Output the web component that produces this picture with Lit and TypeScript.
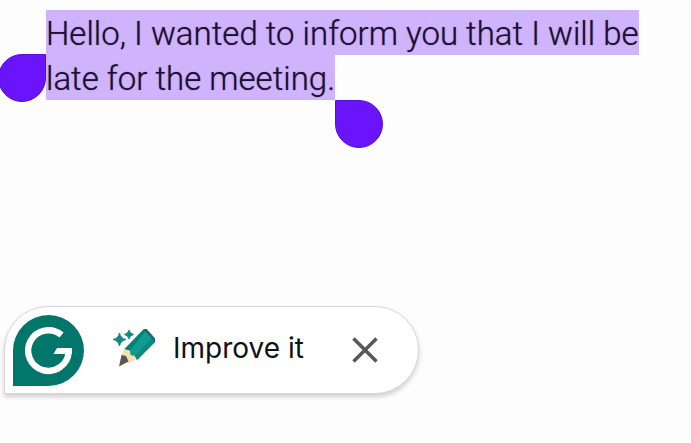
import { LitElement, html, css, svg } from "lit";
import { customElement, state } from "lit/decorators.js";

const logo = svg`
  <path d="M35.500 0A35.500 35.500 0 0 1 35.500 71H0V35.500A35.500 35.500 0 0 1 35.500 0Z" fill="#02766b"/>
  <path d="M48.500 20A20.300 20.300 0 1 0 55.700 37" fill="none" stroke="#fff" stroke-width="6.400"/>
  <path d="M44 33H59V39H40.500Z" fill="#fff"/>`;

const pencil = svg`
  <path d="M6.500 3Q7.500 8.500 13 9.500Q7.500 10.500 6.500 16Q5.500 10.500 0 9.500Q5.500 8.500 6.500 3Z" fill="#12877c" stroke="#12877c"/>
  <path d="M16 0Q16.700 3.800 20.500 4.500Q16.700 5.200 16 9Q15.300 5.200 11.500 4.500Q15.300 3.800 16 0Z" fill="#12877c" stroke="#12877c"/>
  <path d="M11.500 19L8 26L15 33L23 29.500L20 21Z" fill="#f6dfad"/>
  <path d="M8.500 25L6 36.500L15.500 31.500L13 26Z" fill="#5d5456"/>
  <path d="M30 0Q32 -1.500 34 -.5L41.500 8Q43 10.500 41.500 12.500L24 30L22 26L17.500 25L17 20.500L11.500 19Z" fill="#0c9c90"/>
  <path d="M30 0Q32 -1.500 34 -.5L17 20.500L11.500 19Z" fill="#087f76"/>
  <path d="M41.500 8Q43 10.500 41.500 12.500L24 30L22 26L39 8Z" fill="#10877d"/>
  <path d="M30 0Q32 -1.500 34 -.5L41.500 8Q43 10.500 41.500 12.500L40 10L32.500 1.500Z" fill="#176e69"/>`;

@customElement("app-root")
export class AppRoot extends LitElement {
  @state() private open = true;

  static styles = css`
    :host {
      display: block;
      min-height: 100vh;
      box-sizing: border-box;
      padding: 11px 0 49px;
      background: #fefdfe;
      font-family: Roboto, "Liberation Sans", sans-serif;
      overflow-x: hidden;
    }
    .editor {
      position: relative;
      margin: 0 44px 0 46px;
      min-height: 295px;
      font-size: 33px;
      font-weight: 300;
      line-height: 45px;
      color: #1d1030;
      text-shadow: 0 0 1px #1d1030b0;
      outline: none;
    }
    .text {
      margin: 0;
    }
    .selected {
      padding: 4px 0 2px;
      background: #cfb3fd;
      color: inherit;
    }
    .handle {
      position: absolute;
      box-sizing: border-box;
      width: 48px;
      height: 48px;
      border: 1px solid #5410cf;
      background: #6914fb;
    }
    .start {
      top: 43px;
      right: 100%;
      border-radius: 50% 0 50% 50%;
    }
    .anchor {
      position: relative;
      padding-bottom: 2px;
    }
    .end {
      top: 100%;
      left: 0;
      border-radius: 0 50% 50% 50%;
    }
    .bar {
      display: inline-flex;
      align-items: center;
      box-sizing: border-box;
      height: 88px;
      margin-left: 4px;
      padding: 0 34px 0 8px;
      border: 1px solid #d8d6da;
      border-radius: 44px 44px 44px 0;
      background: #fff;
      box-shadow: 0 3px 5px #0000002e;
    }
    button {
      display: flex;
      align-items: center;
      padding: 0;
      border: 0;
      background: none;
      color: #111014;
      cursor: pointer;
    }
    svg {
      display: block;
      overflow: visible;
    }
    .improve {
      gap: 16px;
      margin-left: 29px;
      padding-bottom: 4px;
      font: 400 28px/40px Inter, Roboto, sans-serif;
    }
    .close {
      margin-left: 42px;
      padding: 6px;
    }
  `;

  render() {
    return html`
      <div class="editor" role="textbox" aria-multiline="true" aria-label="Message" tabindex="0">
        <p class="text"><mark class="selected">Hello, I wanted to inform you that I will be late for the meeting.<span class="anchor"><span class="handle end"></span></span></mark></p>
        <span class="handle start"></span>
      </div>
      ${this.open
        ? html`<div class="bar" role="toolbar" aria-label="Writing suggestions">
            <button class="logo" aria-label="Grammarly">
              <svg width="71" height="71" viewBox="0 0 71 71">${logo}</svg>
            </button>
            <button class="improve">
              <svg width="44" height="37" viewBox="0 0 44 37" aria-hidden="true">${pencil}</svg>
              <span>Improve it</span>
            </button>
            <button class="close" aria-label="Close" @click=${() => (this.open = false)}>
              <svg width="26" height="26" viewBox="0 0 26 26">
                <path d="M1.500 1.500L24.500 24.500M24.500 1.500L1.500 24.500" stroke="#57555e" stroke-width="3.500" />
              </svg>
            </button>
          </div>`
        : null}
    `;
  }
}
